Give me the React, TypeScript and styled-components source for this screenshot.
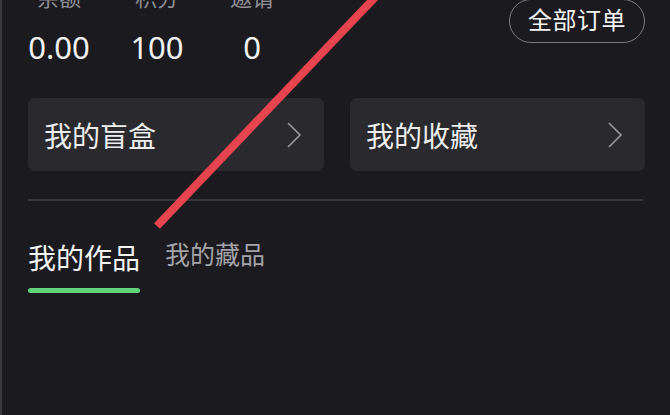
import React from "react";
import styled, { createGlobalStyle } from "styled-components";

const Global = createGlobalStyle`
  html, body { margin: 0; padding: 0; background: #1b1a1f; }
  body { font-family: "Noto Sans CJK SC", "Noto Sans", sans-serif; }
  * { box-sizing: border-box; }
`;

const Page = styled.div`
  position: relative;
  width: 670px;
  height: 415px;
  overflow: hidden;
  background: #1b1a1f;
  border-left: 2px solid #3a3a3f;
  padding: 0 25px 0 26px;
`;

const TopRow = styled.div`
  display: flex;
  justify-content: space-between;
  align-items: flex-start;
  margin-top: -15px;
`;

const Stats = styled.div`
  display: grid;
  grid-template-columns: 62px 56px 56px;
  column-gap: 39px;
  justify-items: center;
`;

const Stat = styled.div`
  display: flex;
  flex-direction: column;
  align-items: center;
`;

const StatLabel = styled.div`
  font-size: 22px;
  line-height: 22px;
  color: #8e8e93;
  white-space: nowrap;
`;

const StatValue = styled.div`
  margin-top: 25px;
  font-family: "Noto Sans", sans-serif;
  font-size: 31px;
  line-height: 31px;
  color: #f2f2f2;
  font-weight: 400;
`;

const OrderButton = styled.div`
  margin-top: 14px;
  height: 44px;
  padding: 0 18px 5px;
  border: 1.5px solid #7b7b80;
  border-radius: 22px;
  display: flex;
  align-items: center;
  font-size: 24px;
  color: #f4f4f4;
  letter-spacing: 0.5px;
`;

const Cards = styled.div`
  display: grid;
  grid-template-columns: 296px 295px;
  gap: 26px;
  margin-top: 35px;
`;

const Card = styled.div`
  height: 73px;
  border-radius: 7px;
  background: #2a2a2e;
  display: flex;
  align-items: center;
  justify-content: space-between;
  padding: 0 22px 0 16px;
  font-size: 28px;
  color: #ededed;
`;

const Divider = styled.div`
  margin-top: 28px;
  height: 2px;
  background: #35353a;
  margin-right: 2px;
`;

const Tabs = styled.div`
  display: flex;
  align-items: flex-end;
  gap: 25px;
  margin-top: 37px;
`;

const Tab = styled.div<{ $active?: boolean }>`
  display: flex;
  flex-direction: column;
  align-items: stretch;
  font-size: ${(p) => (p.$active ? "28px" : "25px")};
  line-height: 1.2;
  color: ${(p) => (p.$active ? "#f4f4f4" : "#a4a4a8")};
  padding-bottom: ${(p) => (p.$active ? "0" : "25px")};
`;

const Underline = styled.div`
  margin-top: 13px;
  height: 5px;
  border-radius: 3px;
  background: #5fd47a;
`;

const Overlay = styled.svg`
  position: absolute;
  left: 0;
  top: 0;
  pointer-events: none;
`;

const Chevron = () => (
  <svg width="16" height="28" viewBox="0 0 16 28" fill="none">
    <path d="M2 2 L14 14 L2 26" stroke="#9a9a9e" strokeWidth="1.6" />
  </svg>
);

export default function App() {
  return (
    <>
      <Global />
      <Page>
        <TopRow>
          <Stats>
            <Stat>
              <StatLabel>余额</StatLabel>
              <StatValue>0.00</StatValue>
            </Stat>
            <Stat>
              <StatLabel>积分</StatLabel>
              <StatValue>100</StatValue>
            </Stat>
            <Stat>
              <StatLabel>邀请</StatLabel>
              <StatValue>0</StatValue>
            </Stat>
          </Stats>
          <OrderButton>全部订单</OrderButton>
        </TopRow>
        <Cards>
          <Card>
            我的盲盒
            <Chevron />
          </Card>
          <Card>
            我的收藏
            <Chevron />
          </Card>
        </Cards>
        <Divider />
        <Tabs>
          <Tab $active>
            我的作品
            <Underline />
          </Tab>
          <Tab>我的藏品</Tab>
        </Tabs>
        <Overlay width="670" height="415" viewBox="0 0 670 415">
          <line x1="155" y1="226" x2="380" y2="-10" stroke="#e6444e" strokeWidth="8" />
        </Overlay>
      </Page>
    </>
  );
}
